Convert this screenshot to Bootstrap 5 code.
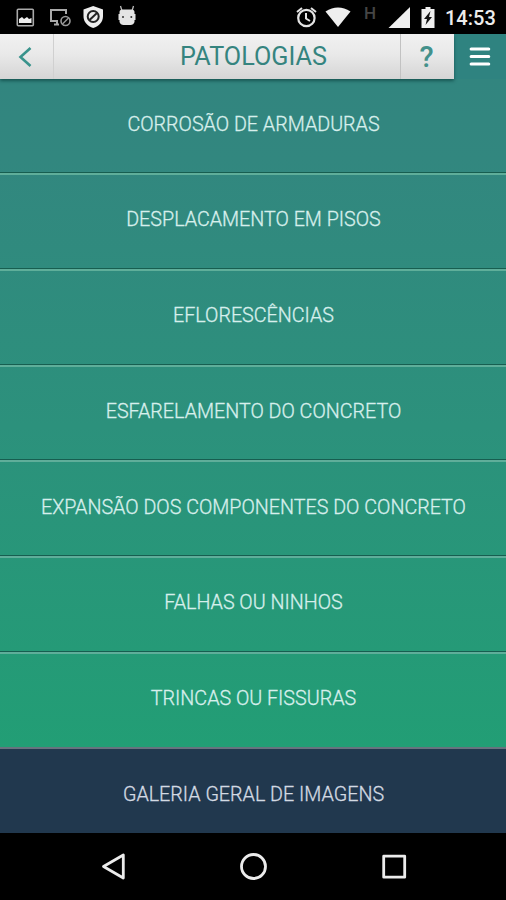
<!DOCTYPE html>
<html lang="pt-BR">
<head>
<meta charset="utf-8">
<meta name="viewport" content="width=device-width, initial-scale=1">
<title>Patologias</title>
<link href="https://cdn.jsdelivr.net/npm/bootstrap@5.3.0/dist/css/bootstrap.min.css" rel="stylesheet">
<style>
body{font-family:Roboto,"Liberation Sans",sans-serif;width:506px;height:900px;overflow:hidden;background:#000}
svg{display:block;flex:none}
.status-bar{height:34px;padding:0 11px 0 12px}
.clock{font-size:20px;font-weight:500;line-height:34px;color:#ececec;padding-top:1px;width:50px;white-space:nowrap}
.net{color:#454545;font-size:17px;font-weight:500;line-height:26px;width:13px;margin-left:2px}
.top-bar{height:45px;background:#2f8380}
.bar-light{width:454px;background:linear-gradient(#f1f1f1,#e9e9e9 45%,#d5d5d5);box-shadow:0 2px 3px rgba(0,50,50,.55);position:relative;z-index:1}
.bar-light button,.menu-btn{border:0;background:none;padding:0;color:#2b827d}
.back-btn{width:54px;border-right:1px solid #d0d0d0!important}
.bar-light .help-btn{width:54px;border-left:1px solid #c2c2c2!important;font-size:29px;font-weight:500;line-height:47px;color:#43918b;padding-right:2px}
.page-title{font-size:25.2px;font-weight:400;line-height:46px;color:#35847f;margin:0;padding-left:53px}
.menu-btn{width:52px}
.topics{height:668px;background:linear-gradient(#32857f,#32877f 12%,#2c917c 52%,#229e75)}
.topics .list-group-item{background:none;border:0;border-top:2px solid #5fae9a;border-bottom:1px solid #175e50;flex:1 1 0;padding:0 0 3px 1px;color:#d7efec;font-size:19.72px;font-weight:300;line-height:1;-webkit-text-stroke:.3px currentColor}
.topics .list-group-item:first-child{border-top:0;flex:0 0 94px;padding-top:2px}
.gallery{height:86px;background:#21384e;border-top:2px solid #66737f;color:#d3dae3;font-size:19.72px;font-weight:300;padding-top:7px;padding-left:1px;-webkit-text-stroke:.3px currentColor}
.nav-keys{height:67px}
</style>
<script src="https://cdn.jsdelivr.net/npm/bootstrap@5.3.0/dist/js/bootstrap.bundle.min.js"></script>
</head>
<body class="d-flex flex-column m-0">
<div class="status-bar d-flex justify-content-between bg-black">
  <svg width="130" height="34" viewBox="12 0 130 34" fill="none">
    <rect x="17.3" y="9.3" width="16" height="16.4" rx="1" stroke="#aaa" stroke-width="1.6"/>
    <path d="M19 23v-4l3-2 2 2 3-2 2 2 2.500-1v5z" fill="#eee"/>
    <path d="M58 21h-7V10h15v4M54 24.500h5M57 21v3" stroke="#aaa" stroke-width="2"/>
    <circle cx="65.500" cy="21" r="4.500" stroke="#999" stroke-width="1.600"/><path d="m62.500 24 6-6" stroke="#999" stroke-width="1.500"/>
    <path d="M93.200 6 103 9.500V16c0 6-4 10-9.800 12C87.500 26 83.500 22 83.500 16V9.500z" fill="#ededed"/>
    <circle cx="93.200" cy="16.500" r="5.500" stroke="#222" stroke-width="2"/><path d="m89.500 20 7.500-7" stroke="#222" stroke-width="2"/>
    <path d="m120.500 6 1.500 5m11.500-5-1.500 5" stroke="#bbb" stroke-width="1.300"/>
    <path d="M119.500 12q0-2.500 3-2.500h9q3 0 3 2.500v2h1v6h-1v2q-1 3-4 3h-7q-3 0-4-3v-2h-1v-6h1z" fill="#e4e4e4"/><circle cx="123" cy="17" r="1" fill="#333"/><circle cx="131.300" cy="17" r="1" fill="#333"/>
  </svg>
  <div class="d-flex">
    <svg width="70" height="34" viewBox="292 0 70 34" fill="none">
      <circle cx="306.400" cy="18" r="8.200" stroke="#e4e4e4" stroke-width="2.200"/>
      <path d="m297 12 5-4m9 0 5 4M306 13v5.500l4 2.500" stroke="#e4e4e4" stroke-width="2"/>
      <path d="M325.500 11.500Q338 3.500 350.500 11.500L338 27z" fill="#efefef"/>
    </svg>
    <span class="net">H</span>
    <svg width="68" height="34" viewBox="378 0 68 34">
      <path d="M389.500 28h21.500V7z" fill="#efefef"/>
      <path d="M422.500 9h4V7h5v2h4v19h-13z" fill="#efefef"/>
      <path d="m431.500 11-6.500 8h3l-1.500 6 6.500-8h-3z" fill="#111"/>
    </svg>
    <span class="clock">14:53</span>
  </div>
</div>
<header class="top-bar d-flex">
  <div class="bar-light d-flex justify-content-between">
    <button class="back-btn" aria-label="Voltar"><svg width="53" height="45" viewBox="0 34 53 45" fill="none" stroke="#39938c" stroke-width="2.600"><path d="m30.500 48-10 9 10 9"/></svg></button>
    <h1 class="page-title">PATOLOGIAS</h1>
    <button class="help-btn">?</button>
  </div>
  <button class="menu-btn" aria-label="Menu"><svg width="52" height="45" viewBox="454 34 52 45" stroke="#fff" stroke-width="3.200" stroke-linecap="round"><path d="M471.200 49h17.500M471.200 56.500h17.500M471.200 64h17.500"/></svg></button>
</header>
<main>
  <div class="topics list-group list-group-flush">
    <a class="list-group-item d-flex align-items-center justify-content-center"><span>CORROSÃO DE ARMADURAS</span></a>
    <a class="list-group-item d-flex align-items-center justify-content-center"><span>DESPLACAMENTO EM PISOS</span></a>
    <a class="list-group-item d-flex align-items-center justify-content-center"><span>EFLORESCÊNCIAS</span></a>
    <a class="list-group-item d-flex align-items-center justify-content-center"><span>ESFARELAMENTO DO CONCRETO</span></a>
    <a class="list-group-item d-flex align-items-center justify-content-center"><span>EXPANSÃO DOS COMPONENTES DO CONCRETO</span></a>
    <a class="list-group-item d-flex align-items-center justify-content-center"><span>FALHAS OU NINHOS</span></a>
    <a class="list-group-item d-flex align-items-center justify-content-center"><span>TRINCAS OU FISSURAS</span></a>
  </div>
  <div class="gallery d-flex align-items-center justify-content-center">GALERIA GERAL DE IMAGENS</div>
</main>
<nav class="nav-keys bg-black">
  <svg width="506" height="67" viewBox="0 833 506 67" fill="none" stroke="#ececec" stroke-width="2.800" stroke-linejoin="round">
    <path d="M123.300 855v23L103.500 866.500z"/><circle cx="253.500" cy="866.500" r="12"/><rect x="383.700" y="856.200" width="21" height="21"/>
  </svg>
</nav>
</body>
</html>
